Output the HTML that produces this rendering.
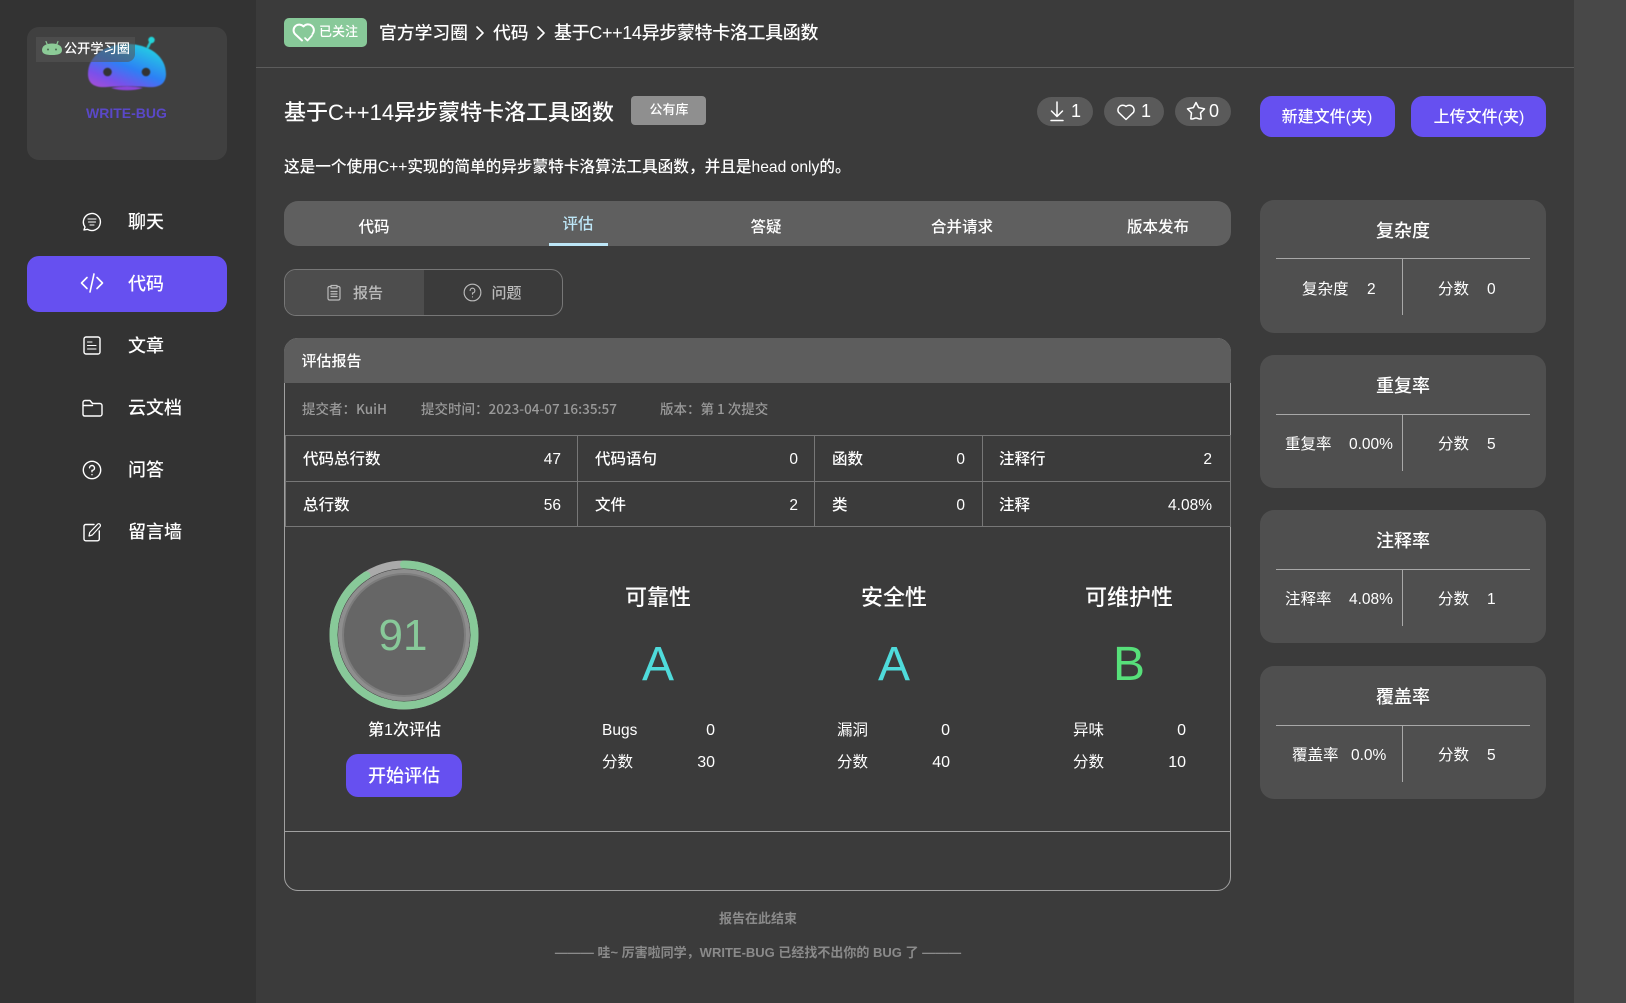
<!DOCTYPE html>
<html lang="zh"><head><meta charset="utf-8"><title>评估报告</title>
<style>
html,body{margin:0;padding:0;width:1626px;height:1003px;overflow:hidden;background:#3b3b3b}
body{position:relative;font-family:"Liberation Sans","Noto Sans CJK SC",sans-serif;color:#fff;font-size:16px}
.b,.t,svg.i{position:absolute}
.t{line-height:24px;white-space:nowrap}
.c{transform:translateX(-50%)}
.r{transform:translateX(-100%)}
.n{font-size:18px;left:128px;color:#fff;font-weight:500}
.lbl{font-size:15.500px;font-weight:500;color:#fff}
.meta{font-family:"Noto Sans CJK SC","Liberation Sans",sans-serif;font-size:13.500px;font-weight:500;color:#9a9a9a}
.tab{font-size:15.500px;font-weight:500;top:216px}
.card{position:absolute;left:1260px;width:286px;height:133px;background:#4f4f4f;border-radius:14px}
.card .hl{position:absolute;left:16px;top:59px;width:254px;height:1px;background:#a8a8a8}
.card .vl{position:absolute;left:142px;top:59px;width:1px;height:57px;background:#a8a8a8}
.card .t{font-size:15.500px;top:77.500px}
.card .t.h{font-size:18px;font-weight:500;top:18.500px;left:143px}
.btn{position:absolute;background:#6650f0;border-radius:12px}
.pill{position:absolute;top:97px;height:29px;background:#5a5a5a;border-radius:15px}
svg.i{fill:none;stroke:#fff;stroke-width:1.4;stroke-linecap:round;stroke-linejoin:round}
</style></head><body>

<div class="b" style="left:0;top:0;width:256px;height:1003px;background:#333"></div>
<div class="b" style="left:1574px;top:0;width:52px;height:1003px;background:#484848"></div>
<div class="b" style="left:256px;top:67px;width:1318px;height:1px;background:#5c5c5c"></div>

<!-- logo card -->
<div class="b" style="left:27px;top:27px;width:200px;height:133px;background:#404040;border-radius:12px"></div>
<svg class="i" style="left:85px;top:36px;stroke:none;filter:blur(.5px)" width="85" height="60" viewBox="0 0 85 60">
<defs><linearGradient id="g" x1="0.85" y1="0" x2="0.1" y2="1"><stop offset="0" stop-color="#22dbe0"/><stop offset=".5" stop-color="#2d80f5"/><stop offset=".8" stop-color="#7a50ea"/><stop offset="1" stop-color="#a24fd8"/></linearGradient></defs>
<path d="M3 38C3 20 20 8 42 8S81 20 81 38C81 48 74 52 62 51C50 50 34 50 22 51C10 52 3 48 3 38Z" fill="url(#g)"/>
<path d="M26 52C36 55 48 55 58 52C48 50 36 50 26 52Z" fill="#8c45d8"/>
<path d="M63 11L66.500 4" stroke="#26c9d2" stroke-width="2.500" fill="none"/><circle cx="66.500" cy="4" r="3.200" fill="#22d3d8"/>
<circle cx="22.500" cy="36" r="4.300" fill="#333"/><circle cx="61" cy="36" r="4.300" fill="#333"/>
</svg>
<div class="b" style="left:36px;top:37px;width:99px;height:25px;background:rgba(84,84,84,.58);border-radius:0 0 8px 0"></div>
<svg class="i" style="left:41px;top:40px;stroke:none" width="22" height="16" viewBox="0 0 22 16">
<path d="M1 10C1 6 5 3.500 11 3.500S21 6 21 10C21 14 17 15 11 15S1 14 1 10Z" fill="#8ccb97"/>
<path d="M5 1.500L6.500 5M17 1.500L15.500 5" stroke="#8ccb97" stroke-width="1.200" fill="none"/>
<circle cx="7" cy="9.500" r="1" fill="#4b6a52"/><circle cx="15" cy="9.500" r="1" fill="#4b6a52"/>
</svg>
<div class="t" style="left:64px;top:36.500px;font-size:13.200px;font-weight:500">公开学习圈</div>
<div class="t" style="left:86px;top:101px;font-size:14px;font-weight:700;color:#5a48c8;filter:blur(.3px)">WRITE-BUG</div>

<!-- nav -->
<div class="b" style="left:27px;top:256px;width:200px;height:56px;background:#6650f0;border-radius:12px"></div>
<svg class="i" style="left:82px;top:212px" width="20" height="20" viewBox="0 0 20 20"><path d="M2 18L3 15A8.500 8.500 0 1 1 5.500 17.300Z"/><path d="M6 7H14M6.500 10H13.500M8 13H12" stroke-width="1.100"/></svg>
<div class="t n" style="top:210px">聊天</div>
<svg class="i" style="left:80px;top:273px;stroke-width:1.600" width="24" height="20" viewBox="0 0 24 20"><path d="M7 4.500L1.500 10L7 15.500M17 4.500L22.500 10L17 15.500M14 1L10 19"/></svg>
<div class="t n" style="top:272px">代码</div>
<svg class="i" style="left:83px;top:336px" width="18" height="20" viewBox="0 0 18 20"><rect x="1" y="1" width="16" height="17" rx="2"/><path d="M4.500 6H9M4.500 9.500H13M4.500 13H13" stroke-width="1.100"/></svg>
<div class="t n" style="top:334px">文章</div>
<svg class="i" style="left:82px;top:398px" width="21" height="20" viewBox="0 0 21 20"><path d="M1 5V16.500A1.800 1.800 0 0 0 2.800 18H18A2 2 0 0 0 20 16V7.500A2 2 0 0 0 18 5.500H10.500L8 2.500H3A2 2 0 0 0 1 4.500ZM1 7.500H10.500"/></svg>
<div class="t n" style="top:396px">云文档</div>
<svg class="i" style="left:82px;top:460px" width="20" height="20" viewBox="0 0 20 20"><circle cx="10" cy="10" r="8.700"/><path d="M7.500 7.800A2.500 2.500 0 1 1 10 10.500V11.800M10 14.600V14.700"/></svg>
<div class="t n" style="top:458px">问答</div>
<svg class="i" style="left:83px;top:522px" width="19" height="20" viewBox="0 0 19 20"><path d="M11 2.500H2.800A1.800 1.800 0 0 0 1 4.300V17A1.800 1.800 0 0 0 2.800 18.800H14.500A1.800 1.800 0 0 0 16.300 17V9"/><path d="M6 14L6.700 10.500L14.500 2.300A1.500 1.500 0 0 1 17 4.600L9.300 13Z" stroke-width="1.200"/></svg>
<div class="t n" style="top:520px">留言墙</div>

<!-- breadcrumb -->
<div class="b" style="left:284px;top:18px;width:83px;height:29px;background:#88c999;border-radius:5px"></div>
<svg class="i" style="left:292px;top:22px;stroke-width:2" width="23" height="21" viewBox="0 0 23 21"><path d="M10 18.500L3 12A5.500 5.500 0 0 1 11.500 4.500A5.500 5.500 0 0 1 20.500 12"/><path d="M13 16L15.500 18.500L20 13.500" stroke-width="1.700"/></svg>
<div class="t" style="left:319px;top:20px;font-size:13px;font-weight:500">已关注</div>
<div class="t" style="left:379px;top:21px;font-size:17.800px;font-weight:500">官方学习圈</div>
<svg class="i" style="left:475px;top:26px;stroke-width:1.600" width="10" height="14" viewBox="0 0 10 14"><path d="M2 1L8 7L2 13"/></svg>
<div class="t" style="left:493px;top:21px;font-size:17.800px;font-weight:500">代码</div>
<svg class="i" style="left:536px;top:26px;stroke-width:1.600" width="10" height="14" viewBox="0 0 10 14"><path d="M2 1L8 7L2 13"/></svg>
<div class="t" style="left:554px;top:21px;font-size:18px;font-weight:500;letter-spacing:-.35px">基于C++14异步蒙特卡洛工具函数</div>

<!-- title -->
<div class="t" style="left:284px;top:100.500px;font-size:22px;font-weight:500">基于C++14异步蒙特卡洛工具函数</div>
<div class="b" style="left:631px;top:96px;width:75px;height:29px;background:#8f8f8f;border-radius:4px"></div>
<div class="t c" style="left:669px;top:98px;font-size:13px;font-weight:500">公有库</div>
<div class="t" style="left:284px;top:155.500px;font-size:15.650px;font-weight:500">这是一个使用C++实现的简单的异步蒙特卡洛算法工具函数，并且是head only的。</div>

<!-- pills -->
<div class="pill" style="left:1037px;width:56px"></div>
<svg class="i" style="left:1048px;top:101px;stroke-width:1.500" width="18" height="21" viewBox="0 0 18 21"><path d="M9 1V15M3.500 10L9 15.500L14.500 10M3 19.500H15"/></svg>
<div class="t" style="left:1071px;top:99px;font-size:18px">1</div>
<div class="pill" style="left:1104px;width:60px"></div>
<svg class="i" style="left:1116px;top:102px;stroke-width:1.500" width="20" height="19" viewBox="0 0 20 19"><path d="M10 17.500L2.500 10.300A4.800 4.800 0 0 1 10 4.500A4.800 4.800 0 0 1 17.500 10.300Z"/></svg>
<div class="t" style="left:1141px;top:99px;font-size:18px">1</div>
<div class="pill" style="left:1175px;width:56px"></div>
<svg class="i" style="left:1186px;top:101px;stroke-width:1.500" width="20" height="20" viewBox="0 0 20 20"><path d="M10 1.500L12.600 6.600L18.500 7.800L14.500 11.900L15.200 17.800C13 18.800 12 17 10 17C8 17 7 18.800 4.800 17.800L5.500 11.900L1.500 7.800L7.400 6.600Z"/></svg>
<div class="t" style="left:1209px;top:99px;font-size:18px">0</div>

<div class="btn" style="left:1260px;top:96px;width:135px;height:41px"></div>
<div class="t c" style="left:1327px;top:106px;font-weight:500">新建文件(夹)</div>
<div class="btn" style="left:1411px;top:96px;width:135px;height:41px"></div>
<div class="t c" style="left:1479px;top:106px;font-weight:500">上传文件(夹)</div>

<!-- tabs -->
<div class="b" style="left:284px;top:201px;width:947px;height:45px;background:#5f5f5f;border-radius:14px"></div>
<div class="t c tab" style="left:374px">代码</div>
<div class="t c tab" style="left:578px;top:212.500px;color:#bde6f7">评估</div>
<div class="b" style="left:549px;top:243px;width:59px;height:3px;background:#bde6f7"></div>
<div class="t c tab" style="left:766px">答疑</div>
<div class="t c tab" style="left:962px">合并请求</div>
<div class="t c tab" style="left:1158px">版本发布</div>

<!-- segmented -->
<div class="b" style="left:284px;top:269px;width:277px;height:45px;border:1px solid #777;border-radius:12px;overflow:hidden"><div style="width:139px;height:45px;background:#4d4d4d"></div></div>
<svg class="i" style="left:327px;top:284px;stroke:#bbb;stroke-width:1.200" width="14" height="17" viewBox="0 0 14 17"><path d="M4 2.500H2.500A1.500 1.500 0 0 0 1 4V14.500A1.500 1.500 0 0 0 2.500 16H11.500A1.500 1.500 0 0 0 13 14.500V4A1.500 1.500 0 0 0 11.500 2.500H10M4 1.500H10V4H4ZM4 7.500H10M4 10H10M4 12.500H10"/></svg>
<div class="t" style="left:353px;top:282px;font-size:15px;font-weight:500;color:#bbb">报告</div>
<svg class="i" style="left:463px;top:283px;stroke:#bbb;stroke-width:1.200" width="19" height="19" viewBox="0 0 20 20"><circle cx="10" cy="10" r="8.800"/><path d="M7.500 7.800A2.500 2.500 0 1 1 10 10.500V11.800M10 14.600V14.700"/></svg>
<div class="t" style="left:491.500px;top:282px;font-size:15px;font-weight:500;color:#bbb">问题</div>

<!-- report -->
<div class="b" style="left:284px;top:338px;width:945px;height:551px;border:1px solid #a0a0a0;border-radius:14px"></div>
<div class="b" style="left:284px;top:338px;width:947px;height:45px;background:#5d5d5d;border-radius:14px 14px 0 0"></div>
<div class="t" style="left:301.500px;top:350px;font-size:15px;font-weight:500">评估报告</div>
<div class="t meta" style="left:302px;top:396px">提交者：KuiH</div>
<div class="t meta" style="left:421px;top:396px">提交时间：2023-04-07 16:35:57</div>
<div class="t meta" style="left:660px;top:396px">版本：第 1 次提交</div>

<!-- table lines -->
<div class="b" style="left:285px;top:435px;width:944px;height:90px;border:1px solid #777"></div>
<div class="b" style="left:285px;top:481px;width:945px;height:1px;background:#777"></div>
<div class="b" style="left:577px;top:435px;width:1px;height:91px;background:#777"></div>
<div class="b" style="left:814px;top:435px;width:1px;height:91px;background:#777"></div>
<div class="b" style="left:982px;top:435px;width:1px;height:91px;background:#777"></div>

<div class="t lbl" style="left:303px;top:447.500px">代码总行数</div><div class="t lbl r" style="left:561px;top:447.500px">47</div>
<div class="t lbl" style="left:595px;top:447.500px">代码语句</div><div class="t lbl r" style="left:798px;top:447.500px">0</div>
<div class="t lbl" style="left:832px;top:447.500px">函数</div><div class="t lbl r" style="left:965px;top:447.500px">0</div>
<div class="t lbl" style="left:999px;top:447.500px">注释行</div><div class="t lbl r" style="left:1212px;top:447.500px">2</div>
<div class="t lbl" style="left:303px;top:493.500px">总行数</div><div class="t lbl r" style="left:561px;top:493.500px">56</div>
<div class="t lbl" style="left:595px;top:493.500px">文件</div><div class="t lbl r" style="left:798px;top:493.500px">2</div>
<div class="t lbl" style="left:832px;top:493.500px">类</div><div class="t lbl r" style="left:965px;top:493.500px">0</div>
<div class="t lbl" style="left:999px;top:493.500px">注释</div><div class="t lbl r" style="left:1212px;top:493.500px">4.08%</div>

<!-- gauge -->
<svg class="i" style="left:329px;top:560px;stroke:none" width="150" height="150" viewBox="0 0 150 150">
<circle cx="75" cy="75" r="66" fill="#8e8e8e"/>
<circle cx="75" cy="75" r="62" fill="#7d7d7d"/>
<circle cx="75" cy="75" r="60" fill="#666"/>
<circle cx="75" cy="75" r="70.500" fill="none" stroke="#aaa" stroke-width="8"/>
<circle cx="75" cy="75" r="70.500" fill="none" stroke="#88c999" stroke-width="8" stroke-dasharray="403.100 443" transform="rotate(-90 75 75)"/>
</svg>
<div class="t c" style="left:403px;top:611px;font-size:44px;line-height:50px;color:#88c999">91</div>
<div class="t c" style="left:404.500px;top:719px;font-weight:500">第1次评估</div>
<div class="btn" style="left:346px;top:754px;width:116px;height:43px"></div>
<div class="t c" style="left:404px;top:764px;font-size:18px;font-weight:500">开始评估</div>

<!-- grades -->
<div class="t c" style="left:658px;top:586px;font-size:22px;font-weight:500">可靠性</div>
<div class="t c" style="left:894px;top:586px;font-size:22px;font-weight:500">安全性</div>
<div class="t c" style="left:1129px;top:586px;font-size:22px;font-weight:500">可维护性</div>
<div class="t c" style="left:658px;top:636px;font-size:48px;line-height:58px;color:#4fdbdb">A</div>
<div class="t c" style="left:894px;top:636px;font-size:48px;line-height:58px;color:#4fdbdb">A</div>
<div class="t c" style="left:1129px;top:636px;font-size:48px;line-height:58px;color:#57e07a">B</div>

<div class="t" style="left:602px;top:719px;font-size:15.500px">Bugs</div><div class="t r" style="left:715px;top:719px">0</div>
<div class="t" style="left:602px;top:751px;font-size:15.500px">分数</div><div class="t r" style="left:715px;top:751px">30</div>
<div class="t" style="left:837px;top:719px;font-size:15.500px">漏洞</div><div class="t r" style="left:950px;top:719px">0</div>
<div class="t" style="left:837px;top:751px;font-size:15.500px">分数</div><div class="t r" style="left:950px;top:751px">40</div>
<div class="t" style="left:1073px;top:719px;font-size:15.500px">异味</div><div class="t r" style="left:1186px;top:719px">0</div>
<div class="t" style="left:1073px;top:751px;font-size:15.500px">分数</div><div class="t r" style="left:1186px;top:751px">10</div>

<div class="b" style="left:284px;top:831px;width:947px;height:1px;background:#a0a0a0"></div>

<div class="t c" style="left:758px;top:907px;font-size:13px;font-weight:700;color:#8a8a8a">报告在此结束</div>
<div class="t c" style="left:758px;top:941px;font-size:13px;font-weight:700;color:#8a8a8a">——— 哇~ 厉害啦同学，WRITE-BUG 已经找不出你的 BUG 了 ———</div>

<!-- side cards -->
<div class="card" style="top:200px"><div class="t c h">复杂度</div><div class="hl" style="top:58px"></div><div class="vl" style="top:58px"></div>
<div class="t" style="left:42px;">复杂度</div><div class="t" style="left:107px;">2</div><div class="t" style="left:178px;">分数</div><div class="t" style="left:227px;">0</div></div>
<div class="card" style="top:355px"><div class="t c h">重复率</div><div class="hl"></div><div class="vl"></div>
<div class="t" style="left:25px;">重复率</div><div class="t" style="left:89px;">0.00%</div><div class="t" style="left:178px;">分数</div><div class="t" style="left:227px;">5</div></div>
<div class="card" style="top:510px"><div class="t c h">注释率</div><div class="hl"></div><div class="vl"></div>
<div class="t" style="left:25px;">注释率</div><div class="t" style="left:89px;">4.08%</div><div class="t" style="left:178px;">分数</div><div class="t" style="left:227px;">1</div></div>
<div class="card" style="top:666px"><div class="t c h">覆盖率</div><div class="hl"></div><div class="vl"></div>
<div class="t" style="left:32px;">覆盖率</div><div class="t" style="left:91px;">0.0%</div><div class="t" style="left:178px;">分数</div><div class="t" style="left:227px;">5</div></div>

</body></html>
